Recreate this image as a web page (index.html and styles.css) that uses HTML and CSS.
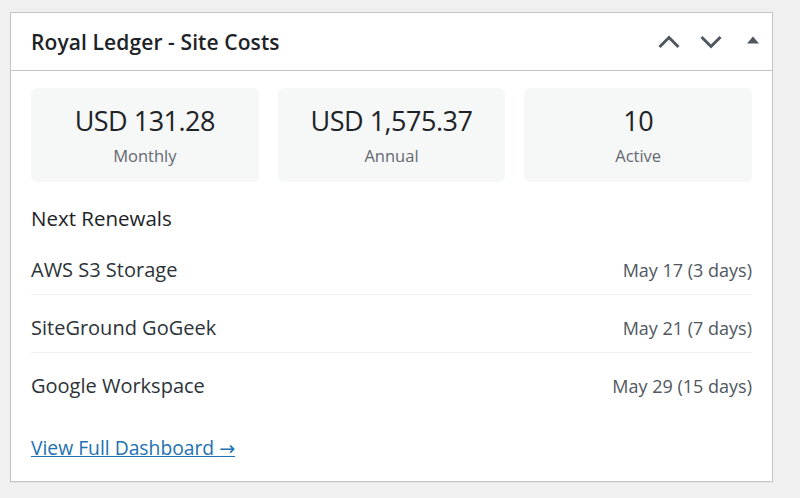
FILE: index.html
```html
<!DOCTYPE html>
<html lang="en">
<head>
<meta charset="utf-8">
<title>Royal Ledger - Site Costs</title>
<link rel="stylesheet" href="styles.css">
</head>
<body>
<div class="postbox">
  <div class="postbox-header">
    <h2 class="title">Royal Ledger - Site Costs</h2>
    <div class="actions">
      <button class="icon-btn" aria-label="Move up">
        <svg width="22" height="14" viewBox="0 0 22 14"><polyline points="1.5,12 11,2.5 20.5,12" fill="none" stroke="#50575e" stroke-width="3"/></svg>
      </button>
      <button class="icon-btn" aria-label="Move down">
        <svg width="22" height="14" viewBox="0 0 22 14"><polyline points="1.5,2 11,11.5 20.5,2" fill="none" stroke="#50575e" stroke-width="3"/></svg>
      </button>
      <button class="icon-btn toggle" aria-label="Toggle panel">
        <svg width="12" height="8" viewBox="0 0 12 8"><polygon points="0,7.5 6,0.5 12,7.5" fill="#50575e"/></svg>
      </button>
    </div>
  </div>
  <div class="inside">
    <div class="stats">
      <div class="stat">
        <div class="stat-value">USD 131.28</div>
        <div class="stat-label">Monthly</div>
      </div>
      <div class="stat">
        <div class="stat-value">USD 1,575.37</div>
        <div class="stat-label">Annual</div>
      </div>
      <div class="stat">
        <div class="stat-value">10</div>
        <div class="stat-label">Active</div>
      </div>
    </div>
    <h3 class="section-title">Next Renewals</h3>
    <ul class="renewals">
      <li class="renewal"><span class="name">AWS S3 Storage</span><span class="date">May 17 (3 days)</span></li>
      <li class="renewal"><span class="name">SiteGround GoGeek</span><span class="date">May 21 (7 days)</span></li>
      <li class="renewal last"><span class="name">Google Workspace</span><span class="date">May 29 (15 days)</span></li>
    </ul>
    <a class="dash-link" href="#">View Full Dashboard <span class="arrow">→</span></a>
  </div>
</div>
</body>
</html>
```
FILE: styles.css
```css
* { box-sizing: border-box; }
html, body { margin: 0; padding: 0; }
body {
  background: #f0f0f1;
  font-family: "Open Sans", "Noto Sans", sans-serif;
  color: #1d2327;
  width: 800px;
  height: 498px;
  padding: 12px 0 0 10px;
}
.postbox {
  width: 763px;
  height: 470px;
  background: #fff;
  border: 1px solid #c3c4c7;
  box-shadow: 0 1px 1px rgba(0,0,0,0.04);
}
.postbox-header {
  height: 58px;
  border-bottom: 1px solid #c3c4c7;
  display: flex;
  align-items: center;
  justify-content: space-between;
  padding: 0 13px 0 20px;
}
.title {
  margin: 0;
  font-size: 21px;
  font-weight: 600;
  color: #1d2327;
  letter-spacing: 0.1px;
}
.actions {
  display: flex;
  align-items: center;
}
.icon-btn {
  background: none;
  border: 0;
  padding: 0;
  margin: 0 0 0 20px;
  display: flex;
  align-items: center;
  cursor: pointer;
  height: 20px;
}
.icon-btn.toggle { margin-left: 25px; padding-bottom: 4px; }
.inside {
  padding: 17px 20px 0 20px;
}
.stats {
  display: grid;
  grid-template-columns: repeat(3, 1fr);
  gap: 19px;
}
.stat {
  background: #f6f7f7;
  border-radius: 6px;
  height: 94px;
  display: flex;
  flex-direction: column;
  align-items: center;
  padding-top: 16px;
}
.stat-value {
  font-size: 27px;
  font-weight: 500;
  line-height: 34px;
  color: #1d2327;
  letter-spacing: -0.5px;
}
.stat-label {
  margin-top: 8px;
  font-size: 16.5px;
  line-height: 20px;
  color: #646970;
}
.section-title {
  margin: 24px 0 0;
  font-size: 20.5px;
  font-weight: 400;
  line-height: 24px;
  color: #1d2327;
}
.renewals {
  list-style: none;
  margin: 18px 0 0;
  padding: 0;
}
.renewal {
  display: flex;
  justify-content: space-between;
  align-items: center;
  padding: 10px 0 12px;
  margin-bottom: 11px;
  border-bottom: 1px solid #f0f0f1;
  line-height: 24px;
}
.renewal.last { border-bottom: 0; margin-bottom: 0; }
.name {
  font-size: 20px;
  color: #2c3338;
}
.date {
  font-size: 18px;
  color: #50575e;
}
.dash-link {
  display: inline-block;
  margin-top: 26px;
  font-size: 19.3px;
  line-height: 24px;
  color: #2271b1;
  text-decoration: underline;
}
.arrow {
  font-family: "DejaVu Sans", sans-serif;
  font-size: 19px;
}
```
